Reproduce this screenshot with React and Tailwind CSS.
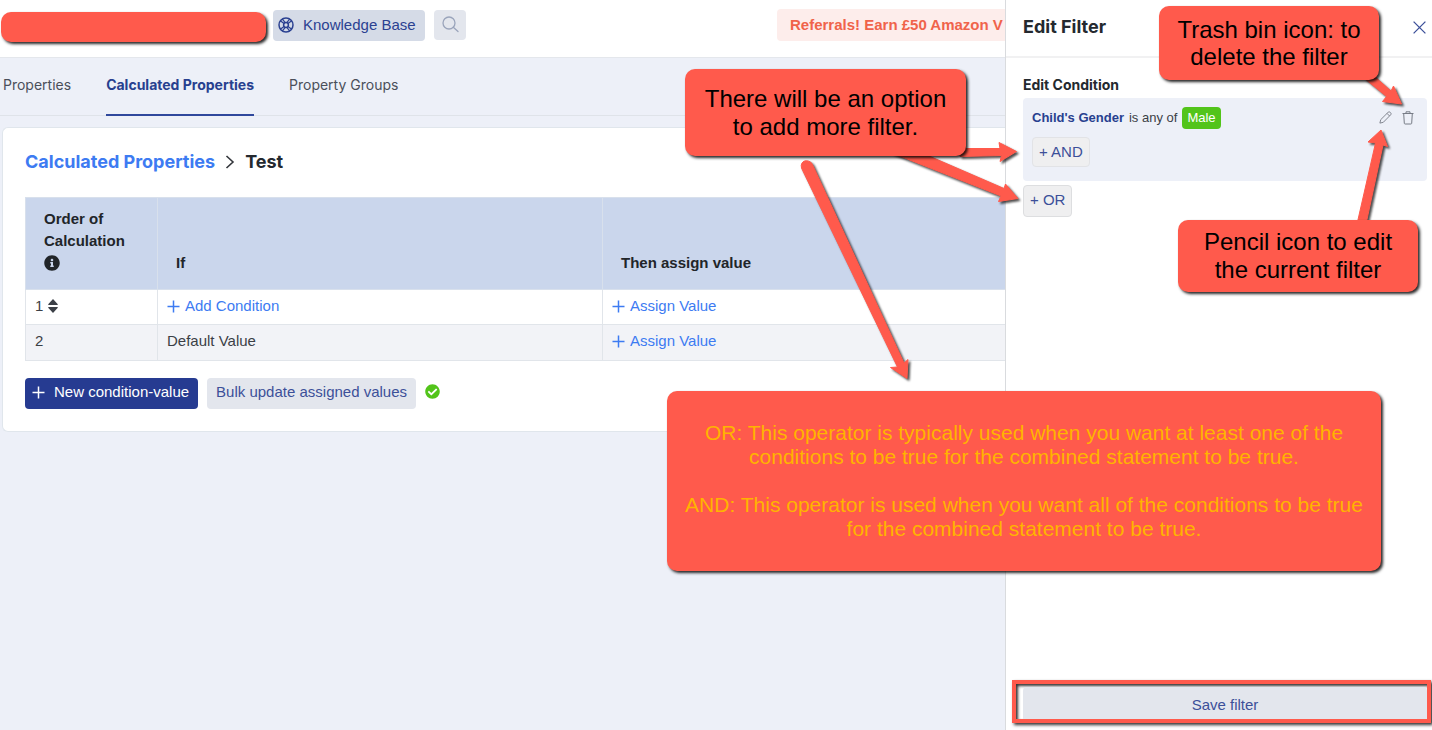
import React from "react";
import { FaCheckCircle, FaInfoCircle } from "react-icons/fa";

const sans = "font-['Liberation_Sans',Arial,sans-serif]";
const display = "font-['Inter','Liberation_Sans',sans-serif]";
const calloutStyle =
  "absolute flex items-center justify-center rounded-[10px] bg-[#ff5a4c] text-center shadow-[2px_2px_3px_rgba(0,0,0,0.85)]";

function PlusIcon() {
  return (
    <svg width="13" height="13" viewBox="0 0 13 13" fill="none" stroke="currentColor" strokeWidth="1.5" aria-hidden="true">
      <path d="M6.5 0.5v12M0.5 6.5h12" />
    </svg>
  );
}

function SortIcon() {
  return (
    <svg width="10" height="14" viewBox="0 0 10 14" fill="currentColor" aria-hidden="true">
      <path d="M5 0 9.800 5.200Q10 6 9.300 6H.7Q0 6 .2 5.200zM5 14 .2 8.800Q0 8 .7 8h8.600q.7 0 .5.800z" />
    </svg>
  );
}

function LifeRingIcon() {
  return (
    <svg width="18" height="16" viewBox="0 0 18 16" fill="none" stroke="currentColor" strokeWidth="1.500" aria-hidden="true">
      <circle cx="9" cy="8" r="7" />
      <circle cx="9" cy="8" r="2.400" />
      <path d="M3 3.600 7 6.500M5.200 1.800 8.200 5.600M15 3.600 11 6.500M12.800 1.800 9.800 5.600M3 12.400 7 9.500M5.200 14.200 8.200 10.400M15 12.400 11 9.500M12.800 14.200 9.800 10.400" strokeWidth="1.200" />
    </svg>
  );
}

function SearchIcon() {
  return (
    <svg width="17" height="17" viewBox="0 0 17 17" fill="none" stroke="currentColor" strokeWidth="1.3" aria-hidden="true">
      <circle cx="7" cy="7" r="6" />
      <path d="m11.3 11.3 4.7 4.2" strokeLinecap="round" />
    </svg>
  );
}

function PencilIcon() {
  return (
    <svg width="13" height="13" viewBox="0 0 13 13" fill="none" stroke="currentColor" strokeWidth="0.9" strokeLinejoin="round" aria-hidden="true">
      <path d="M.9 12.1l.8-3.4L9.1 1.300q1-.9 2-.1l.6.6q.9 1 0 2L4.300 11.300zM8 2.400l2.600 2.600" />
    </svg>
  );
}

function TrashIcon() {
  return (
    <svg width="12" height="14" viewBox="0 0 12 14" fill="none" stroke="currentColor" strokeWidth="1" strokeLinejoin="round" aria-hidden="true">
      <path d="M.5 2.500h11M4 2.300V.800h4v1.500M1.700 2.500l.6 9.800q.1.700.8.700h5.800q.7 0 .8-.7l.6-9.800" />
    </svg>
  );
}

function Header() {
  return (
    <header className="flex h-[58px] items-center border-b border-[#e4e7ec] bg-white pb-1">
      <div className="ml-px h-[30px] w-[265px] shrink-0 rounded-[10px] bg-[#ff5a4c] shadow-[2px_2px_3px_rgba(0,0,0,0.85)]" />
      <a href="#knowledge" className="mb-[3px] ml-[7px] flex h-[31px] w-[152px] shrink-0 items-center gap-2 rounded bg-[#d5dbe7] px-1 text-[#2b4191]">
        <LifeRingIcon />
        Knowledge Base
      </a>
      <button type="button" aria-label="Search" className="mb-1 ml-[9px] flex h-[30px] w-8 shrink-0 items-center justify-center rounded bg-[#e3e6ed] text-[#9aa4bb]">
        <SearchIcon />
      </button>
      <a href="#referrals" className="mb-[3px] ml-auto w-[228px] shrink-0 overflow-hidden rounded-l bg-[#fdedeb] py-1 pl-[13px] font-bold leading-6 whitespace-nowrap text-[#f0634a]">
        Referrals! Earn £50 Amazon V
      </a>
    </header>
  );
}

function Tabs() {
  return (
    <nav className={`flex h-[58px] gap-[35px] border-b border-[#dfe3e9] pl-[3px] text-[14px] text-[#4a4f5a] ${display}`}>
      <a href="#properties" className="pt-4">Properties</a>
      <a href="#calculated" className="-mb-px border-b-2 border-[#2f489c] pt-4 font-bold text-[#27408f]">Calculated Properties</a>
      <a href="#groups" className="pt-4">Property Groups</a>
    </nav>
  );
}

const headCell = "border border-[#d8e0ec] px-[18px] pb-[15px] text-left";
const cell = "border border-[#e1e5ea] px-[9px] pb-0.5 text-left";

function ActionLink({ children }) {
  return (
    <a href="#action" className="flex items-center gap-[5px] text-[#3d7bf2]">
      <PlusIcon />
      {children}
    </a>
  );
}

function ConditionTable() {
  return (
    <table className="w-full table-fixed border-collapse">
      <thead>
        <tr className="h-[92px] bg-[#cad6ec] align-bottom leading-[22px] text-[#212529]">
          <th scope="col" className={`${headCell} w-[132px]`}>
            Order of Calculation
            <FaInfoCircle className="my-[3px]" size={16} />
          </th>
          <th scope="col" className={`${headCell} w-[445px]`}>If</th>
          <th scope="col" className={`${headCell} border-r-0`}>Then assign value</th>
        </tr>
      </thead>
      <tbody>
        <tr className="h-[35px]">
          <td className={cell}>
            <span className="flex items-center gap-[5px]">1 <SortIcon /></span>
          </td>
          <td className={cell}><ActionLink>Add Condition</ActionLink></td>
          <td className={`${cell} border-r-0`}><ActionLink>Assign Value</ActionLink></td>
        </tr>
        <tr className="h-9 bg-[#f2f3f7]">
          <td className={cell}>2</td>
          <td className={cell}>Default Value</td>
          <td className={`${cell} border-r-0`}><ActionLink>Assign Value</ActionLink></td>
        </tr>
      </tbody>
    </table>
  );
}

function CalculatedCard() {
  return (
    <section className="mt-[11px] ml-0.5 rounded-l-md border border-r-0 border-[#e0e6ec] bg-white pb-[22px] pl-[22px]">
      <h1 className={`flex items-center gap-[10px] pt-5 pb-[21px] text-[18px] leading-7 font-bold ${display}`}>
        <a href="#calculated" className="text-[#3d7bf2]">Calculated Properties</a>
        <svg width="10" height="14" viewBox="0 0 10 14" fill="none" stroke="#33363b" strokeWidth="1.6" aria-hidden="true">
          <path d="m1.500 1 6.500 6-6.500 6" />
        </svg>
        <span className="text-[#24292f]">Test</span>
      </h1>
      <ConditionTable />
      <div className="mt-[17px] flex items-center gap-[9px]">
        <button type="button" className="flex h-[31px] items-center gap-[9px] rounded bg-[#263b91] pr-[9px] pb-0.5 pl-[7px] text-white">
          <PlusIcon />
          New condition-value
        </button>
        <button type="button" className="h-[31px] rounded bg-[#e3e6ed] px-[9px] pb-0.5 text-[#3c5099]">Bulk update assigned values</button>
        <FaCheckCircle size={15} className="mb-1 text-[#52c41a]" />
      </div>
    </section>
  );
}

function FilterPanel() {
  return (
    <aside className="flex w-[427px] shrink-0 flex-col border-l border-[#d9dbde] bg-white">
      <div className="flex h-[58px] items-center justify-between border-b-2 border-[#f1f1f2] pr-1.5 pb-0.5 pl-[17px]">
        <h2 className={`pb-0.5 text-[18px] font-bold text-[#24292f] ${display}`}>Edit Filter</h2>
        <button type="button" aria-label="Close" className="text-[#3c5099]">
          <svg width="13" height="13" viewBox="0 0 13 13" fill="none" stroke="currentColor" strokeWidth="1.3" aria-hidden="true">
            <path d="m.6.6 11.800 11.800M12.400.6.6 12.400" />
          </svg>
        </button>
      </div>
      <div className="flex flex-1 flex-col items-start pt-[15px] pr-[5px] pl-[17px]">
        <h3 className={`pb-px text-[14px] leading-6 font-bold text-[#24292f] ${display}`}>Edit Condition</h3>
        <div className="w-full rounded bg-[#edf0f8] px-[9px] pt-2 pb-[14px]">
          <div className="flex h-[23px] items-center gap-[5px] pr-1 text-[13px]">
            <b className="text-[#27408f]">Child's Gender</b>
            <span>is any of</span>
            <span className="rounded-sm bg-[#52c41a] px-[5px] leading-[22px] text-white">Male</span>
            <button type="button" aria-label="Edit filter" className="ml-auto text-[#777c86]"><PencilIcon /></button>
            <button type="button" aria-label="Delete filter" className="ml-[5px] text-[#777c86]"><TrashIcon /></button>
          </div>
          <button type="button" className="mt-2 h-[30px] rounded border border-[#e2e3e6] bg-[#efeff0] px-1.5 text-[#3c5099]">+ AND</button>
        </div>
        <button type="button" className="mt-1 h-8 rounded border border-[#dddee0] bg-[#efeff0] px-1.5 pb-0.5 text-[#3c5099]">+ OR</button>
      </div>
      <div className="mr-px mb-[7px] ml-1.5 border-4 border-[#ff5a4c] pt-[3px] pl-[7px] shadow-[2px_2px_3px_rgba(0,0,0,0.8),inset_2px_2px_3px_rgba(0,0,0,0.8)]">
        <button type="button" className="block h-8 w-full rounded-t bg-[#e3e6ed] pt-1 text-[#3c5099]">Save filter</button>
      </div>
    </aside>
  );
}

function Annotations() {
  return (
    <>
      <svg width="1432" height="730" viewBox="0 0 1432 730" className="pointer-events-none absolute top-0 left-0" fill="#ff5a4c" stroke="#ff5a4c" strokeLinejoin="round" aria-hidden="true">
        <g className="drop-shadow-[2px_2px_1px_rgba(0,0,0,0.7)]">
          <path d="M960 148.500 1000 148.500 999 142.500 1016.500 151.500 1000 161.500 1001.500 155.500 960 156.500z" />
          <path d="M922 153 1004 188.500 1005.500 184 1018 198.500 998.500 201.500 1001 196 892 153z" />
          <path d="M812 163.500 904 363 908 359.500 907 378.500 890.500 367.500 897.500 367 801.500 168C799.500 160.500 808 158.500 812 163.500z" />
          <path d="M1374 76 1391 91 1393.500 86 1401.500 104 1382.500 101.500 1386.500 96.500 1364 78z" />
          <path d="M1357 224 1375.500 143 1368 142 1381 130 1387.500 146.500 1383 145 1366 224z" />
        </g>
      </svg>
      <p className={`${calloutStyle} top-[69px] left-[685px] h-[87px] w-[281px] text-[24px] leading-7 text-black`}>
        There will be an option<br />to add more filter.
      </p>
      <p className={`${calloutStyle} top-[6px] left-[1159px] h-[74px] w-[220px] text-[24px] leading-[27px] text-black`}>
        Trash bin icon: to<br />delete the filter
      </p>
      <p className={`${calloutStyle} top-[220px] left-[1178px] h-[72px] w-[240px] text-[24px] leading-7 text-black`}>
        Pencil icon to edit<br />the current filter
      </p>
      <div className={`${calloutStyle} top-[391px] left-[667px] h-[180px] w-[714px] flex-col gap-6 text-[21px] leading-6 text-[#ffb400]`}>
        <p>OR: This operator is typically used when you want at least one of the<br />conditions to be true for the combined statement to be true.</p>
        <p>AND: This operator is used when you want all of the conditions to be true<br />for the combined statement to be true.</p>
      </div>
    </>
  );
}

export default function App() {
  return (
    <div className={`relative flex min-h-screen overflow-hidden bg-[#edf0f8] text-[15px] text-[#3b3f46] ${sans}`}>
      <main className="min-w-0 flex-1">
        <Header />
        <Tabs />
        <CalculatedCard />
      </main>
      <FilterPanel />
      <Annotations />
    </div>
  );
}
